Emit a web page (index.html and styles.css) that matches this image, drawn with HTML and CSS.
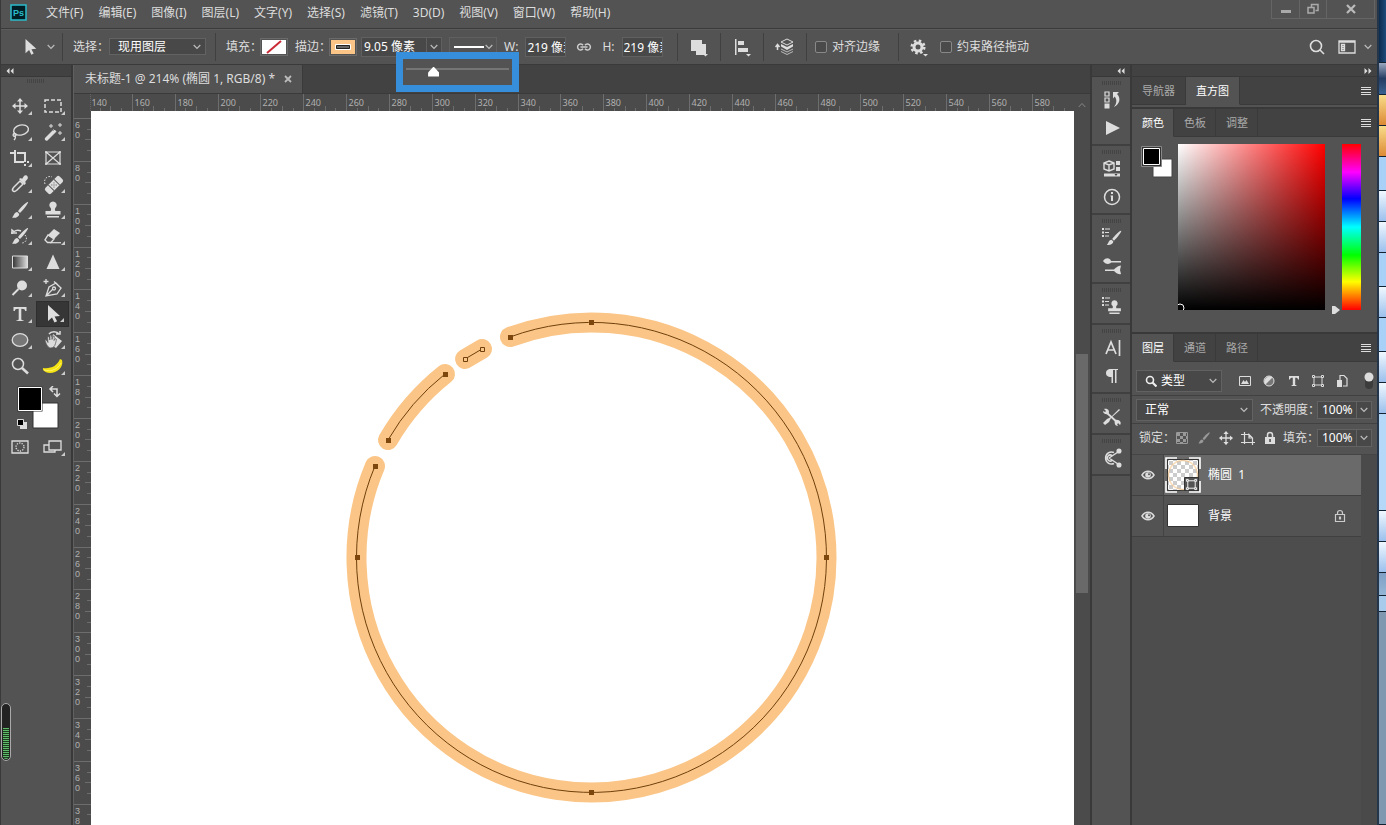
FILE: index.html
```html
<!DOCTYPE html>
<html lang="zh-CN">
<head>
<meta charset="utf-8">
<title>未标题-1</title>
<link rel="stylesheet" href="styles.css">
</head>
<body>
<svg class="defs" aria-hidden="true">
  <symbol id="chev" viewBox="0 0 8 6"><path d="M.7 1 4 4.500 7.300 1" fill="none" stroke="currentColor" stroke-width="1.200"/></symbol>
  <symbol id="left" viewBox="0 0 8 6"><path d="M3.500 0v6L.5 3zM7.500 0v6L4.500 3z" fill="currentColor"/></symbol>
  <symbol id="right" viewBox="0 0 8 6"><path d="M.5 0v6l3-3zM4.500 0v6l3-3z" fill="currentColor"/></symbol>
  <symbol id="lines" viewBox="0 0 10 8"><path d="M0 .5h10M0 2.500h10M0 5.500h10M0 7.500h10" stroke="currentColor"/></symbol>
  <symbol id="move" viewBox="0 0 20 20"><path d="M10 3v14M3 10h14" stroke="currentColor" stroke-width="1.500"/><path d="m10 2 3 3.500H7zM10 18l3-3.500H7zM2 10l3.500-3v6zM18 10l-3.500-3v6z" fill="currentColor"/></symbol>
  <symbol id="brush" viewBox="0 0 20 20"><path d="M18 2c1 .6-5 8.500-8 11L8 11.200C10.500 7.500 17 1.200 18 2zM7.300 12l2 1.900C9 17 5 18.500 2 17.500c1.800-.8 1.500-5 5.300-5.500z" fill="currentColor"/></symbol>
  <symbol id="stamp" viewBox="0 0 20 20"><path d="M10 1.500a3.700 3.700 0 0 1 2.200 6.700c-.5.500-.3 2.300.3 2.800h5v3.500h-15V11h5c.6-.5.8-2.300.3-2.800A3.700 3.700 0 0 1 10 1.500zM4 16h12v1.500H4z" fill="currentColor"/></symbol>
  <symbol id="arrow" viewBox="0 0 20 20"><path d="M5 1v16l4-3.600 2.500 5.100 2.600-1.300-2.500-4.800L17 12z" fill="currentColor"/></symbol>
  <symbol id="eye" viewBox="0 0 14 10"><path d="M1 5c3-5 9-5 12 0-3 5-9 5-12 0z" fill="none" stroke="currentColor" stroke-width="1.500"/><circle cx="7" cy="5" r="2.800" fill="currentColor"/><circle cx="8" cy="4.200" r="1" fill="#555"/></symbol>
  <symbol id="frame" viewBox="0 0 14 14"><path d="M3 3h8v8H3z" fill="none" stroke="currentColor"/><path d="M1.500 1.500h2v2h-2zM10.500 1.500h2v2h-2zM1.500 10.500h2v2h-2zM10.500 10.500h2v2h-2z" fill="#454545" stroke="currentColor"/></symbol>
  <symbol id="list" viewBox="0 0 8 9"><path d="M0 0h2v2H0zM3 .5h5v1H3zM0 3.500h2v2H0zM3 4h4v1H3zM0 7h2v2H0zM3 7.500h4v1H3z" fill="currentColor"/></symbol>
</svg>

<div class="screen">
  <div class="app">
    <header class="menubar">
      <svg class="logo" viewBox="0 0 17 17" role="img" aria-label="Photoshop"><rect x="1" y="1" width="15" height="15" fill="#001d26" stroke="#2bbccb" stroke-width="1.500"/><text x="8.500" y="12" text-anchor="middle">Ps</text></svg>
      <nav class="menus">
        <button>文件(F)</button><button>编辑(E)</button><button>图像(I)</button><button>图层(L)</button><button>文字(Y)</button><button>选择(S)</button><button>滤镜(T)</button><button>3D(D)</button><button>视图(V)</button><button>窗口(W)</button><button>帮助(H)</button>
      </nav>
      <div class="winbtns">
        <button aria-label="最小化"><svg width="12" height="12"><path d="M1 7h10v3H1z" fill="#aaa"/></svg></button>
        <button aria-label="还原"><svg width="12" height="12" fill="none" stroke="#aaa" stroke-width="1.500"><path d="M4.500 4V1.500H11V7.500H8.500M1 4.500h6V10H1z"/></svg></button>
        <button class="wide" aria-label="关闭"><svg width="12" height="12" stroke="#bbb" stroke-width="2.200"><path d="m2 2 8 8M10 2 2 10"/></svg></button>
      </div>
    </header>

    <section class="options">
      <div class="group tool-now"><svg class="i18"><use href="#arrow"/></svg><svg class="chev"><use href="#chev"/></svg></div>
      <div class="group pick">
        <label for="pick">选择：</label>
        <span class="selectbox pickbox"><select id="pick"><option>现用图层</option></select><svg class="chev"><use href="#chev"/></svg></span>
      </div>
      <div class="group paint">
        <span class="cap">填充：</span><button class="swatch" aria-label="填充"><svg width="24" height="14"><path fill="#fff" d="M0 0h24v14H0z"/><path d="m5 13 14-12" stroke="#c92a35" stroke-width="2"/></svg></button>
        <span class="cap second">描边：</span><button class="swatch" aria-label="描边"><svg width="24" height="14"><path fill="#fac586" d="M0 0h24v14H0z"/><path d="M5.500 5.500h13v3h-13z" fill="#666" stroke="#222"/><path d="M4.500 4.500h15v5h-15z" fill="none" stroke="#fff"/></svg></button>
        <span class="widthbox">
          <input type="text" aria-label="描边宽度" value="9.05 像素"><button aria-label="宽度滑块"><svg class="chev"><use href="#chev"/></svg></button>
          <span class="slider-pop"><input type="range" aria-label="描边宽度滑块" min="0" max="100" value="24"></span>
        </span>
        <button class="linebox" aria-label="描边类型"><svg width="30" height="4"><path d="M0 1h30v2H0z" fill="#fff"/></svg><svg class="chev"><use href="#chev"/></svg></button>
        <label for="w" class="wh">W:</label><input id="w" class="num" type="text" value="219 像素">
        <svg class="link" viewBox="0 0 16 10" fill="none" stroke="#ccc" stroke-width="1.500"><path d="M7 3.200A3 3 0 1 0 7 6.800M9 3.200a3 3 0 1 1 0 3.600M4.500 5h7"/></svg>
        <label for="h">H:</label><input id="h" class="num" type="text" value="219 像素">
      </div>
      <div class="group iconcell"><button aria-label="路径操作"><svg class="i18" fill="#ddd"><path d="M1 2h11v4h4v11H6v-4H1z"/><path d="M13 16h5l-2.500 2.500z"/></svg></button></div>
      <div class="group iconcell"><button aria-label="路径对齐方式"><svg class="i18" fill="#ddd"><path d="M2 1h1.500v16H2zM5 3h6v4H5zM5 10h10v4H5zM13 16h5l-2.500 2.500z"/></svg></button></div>
      <div class="group iconcell"><button aria-label="路径排列方式"><svg width="20" height="18"><path d="m12 1 6 3-6 3-6-3z" fill="#535353" stroke="#ddd"/><path d="m6 6 6 3 6-3v2.500l-6 3.500-6-3.500z" fill="#ddd"/><path d="m6 11 6 3 6-3M6 13.500l6 3 6-3" fill="none" stroke="#bbb"/><path d="M2.500 12V7M.5 9l2-2.500 2 2.500" fill="none" stroke="#ddd" stroke-width="1.500"/></svg></button></div>
      <div class="group checks"><label><input type="checkbox">对齐边缘</label></div>
      <div class="group gearcell"><button aria-label="设置"><svg class="i18"><circle cx="8" cy="9" r="4" fill="none" stroke="#ddd" stroke-width="3"/><circle cx="8" cy="9" r="6.300" fill="none" stroke="#ddd" stroke-width="2.500" stroke-dasharray="2.500 2.450"/><path d="M13 16h5l-2.500 2.500z" fill="#ddd"/></svg></button><label><input type="checkbox">约束路径拖动</label></div>
      <div class="opt-right">
        <button aria-label="搜索"><svg width="16" height="16" fill="none" stroke="#ddd" stroke-width="1.600"><circle cx="7" cy="7" r="5.500"/><path d="m11 11 4 4"/></svg></button>
        <button class="space" aria-label="工作区"><svg width="18" height="14" fill="none" stroke="#ddd" stroke-width="1.300"><path d="M1 1h16v12H1zM1 2h16M3.500 4.500h3v6h-3zM3.500 6.500h3M3.500 8.500h3"/></svg></button>
        <svg class="chev"><use href="#chev"/></svg>
      </div>
    </section>

    <main class="work">
      <aside class="tools">
        <div class="strip"><svg width="8" height="6"><use href="#left"/></svg></div>
        <div class="grip"></div>
        <div class="toolgrid">
          <button aria-label="移动"><svg><use href="#move"/></svg></button>
          <button aria-label="矩形选框"><svg fill="none" stroke="currentColor" stroke-width="1.500"><path d="M2 4h16v12H2z" stroke-dasharray="4 2"/></svg></button>
          <button aria-label="套索"><svg fill="none" stroke="currentColor" stroke-width="1.400"><ellipse cx="11" cy="8" rx="7.500" ry="5" transform="rotate(-12 11 8)"/><path d="M5 11c-3 1-2 4 0 3s1-3-1-2M5 14c1 1 0 3-1 4"/></svg></button>
          <button aria-label="魔棒"><svg><path d="m2 16 9-9 2.500 2.500-9 9c-1.500 1-3.500-1-2.500-2.500z" fill="currentColor"/><path d="m10.500 8.500 2-2" stroke="#535353"/><path d="M8 2v4M6 4h4M17 1v4M15 3h4M17 9v4M15 11h4" stroke="currentColor"/></svg></button>
          <button aria-label="裁剪"><svg fill="none" stroke="currentColor" stroke-width="2"><path d="M5 2v12h9M0 5h4M7 5h8v9M15 16v2M17 14h2"/></svg></button>
          <button class="plain" aria-label="图框"><svg fill="none" stroke="currentColor"><path d="M3 4h14v12H3zM3 4l14 12M17 4 3 16" stroke-width="1.200"/><path d="M2.500 3.500h1v1h-1zM16.500 3.500h1v1h-1zM2.500 15.500h1v1h-1zM16.500 15.500h1v1h-1z"/></svg></button>
          <button aria-label="吸管"><svg><path d="M3 17c-1-1 0-3 1-4l6-6 3 3-6 6c-1 1-3 2-4 1z" fill="none" stroke="currentColor" stroke-width="1.500"/><path d="m9 5 2-1 1 1 2-3c2-2 5 1 3.500 3L15 8l1 1-1.500 2z" fill="currentColor"/></svg></button>
          <button aria-label="修复画笔"><svg><g transform="rotate(-45 11 11)"><rect x="1" y="7" width="20" height="8" rx="2" fill="currentColor"/><path d="M7 7v8M15 7v8" stroke="#535353"/><path d="M9 9h1v1H9zM12 9h1v1h-1zM10.500 10.500h1v1h-1zM9 12h1v1H9zM12 12h1v1h-1z" fill="#535353"/></g><path d="M2 10C0 5 5 1 9 3" fill="none" stroke="currentColor" stroke-dasharray="1.500 1.500"/></svg></button>
          <button aria-label="画笔"><svg><use href="#brush"/></svg></button>
          <button aria-label="仿制图章"><svg><use href="#stamp"/></svg></button>
          <button aria-label="历史记录画笔"><svg><use href="#brush"/><path d="M2 8V4l2 1.500C6 4 9 4 11 5M1 7h6" fill="none" stroke="currentColor" stroke-width="1.500"/><path d="M15 9c3 3 1 8-3 8" fill="none" stroke="currentColor" stroke-dasharray="1.500 1.500"/></svg></button>
          <button aria-label="橡皮擦"><svg><path d="m11 3 6 4-6 6-6-4z" fill="currentColor"/><path d="m5 9 6 4-3 3.500H4.500L2 14z" fill="none" stroke="currentColor" stroke-width="1.400"/><path d="M7 16.700h11" stroke="currentColor" stroke-width="1.200"/></svg></button>
          <button aria-label="渐变"><svg><defs><linearGradient id="gr"><stop stop-color="#333"/><stop offset="1" stop-color="#ddd"/></linearGradient></defs><path d="M2.500 4h15v12h-15z" fill="url(#gr)" stroke="#ddd"/></svg></button>
          <button aria-label="锐化"><svg><path d="M10 2.500 16.500 17h-13z" fill="currentColor"/></svg></button>
          <button aria-label="减淡"><svg><circle cx="12" cy="7.500" r="5" fill="currentColor"/><path d="m8.500 11-6 6" stroke="currentColor" stroke-width="2"/></svg></button>
          <button aria-label="钢笔"><svg fill="none" stroke="currentColor" stroke-width="1.300"><path d="m3 18 3-9 7-4 5 5-4 6zM3 18l7-7M11 3.500l7.500 7"/><circle cx="11" cy="10.500" r="1.500"/><path d="M3 1v5M.5 3.500h5"/></svg></button>
          <button aria-label="文字"><svg><path d="M3.500 3h13v4h-1.300c-.3-1.600-.8-2.300-3.900-2.300V15c0 1 .5 1.200 2.200 1.300V17h-7v-.7c1.700-.1 2.200-.3 2.200-1.300V4.700C5.600 4.700 5.100 5.400 4.800 7H3.500z" fill="currentColor"/></svg></button>
          <button class="on" aria-label="路径选择" aria-pressed="true"><svg><use href="#arrow"/></svg></button>
          <button aria-label="椭圆"><svg><ellipse cx="10" cy="10" rx="7.800" ry="6.300" fill="#777" stroke="#ddd" stroke-width="1.300"/></svg></button>
          <button aria-label="旋转视图"><svg><path d="m10 4 9 7-6 7-5-3z" fill="currentColor"/><path d="M2 10c1-1 2 1 3 2.500L4.500 7c.8-1.500 2 0 2.300 3L7 5.500c1-1.500 2 0 2 4l1.200-3.500c1.500-.5 1.300 1 .8 4.500l1.500-2c1.500 0 .5 3 0 5-.7 3-2.500 4.500-5 4.500-2 0-4.500-3.500-5.500-8z" fill="currentColor" stroke="#535353" stroke-width=".7"/><path d="M6 4c2-3 8-3 10 0M13 4h4V1" fill="none" stroke="currentColor" stroke-width="1.500"/></svg></button>
          <button class="plain" aria-label="缩放"><svg fill="none" stroke="currentColor"><circle cx="8" cy="8" r="5.500" stroke-width="1.500"/><path d="m12 12 6 5.500" stroke-width="2.500"/></svg></button>
          <button aria-label="编辑工具栏"><svg><path d="M0 12c8 1 14-2 17-9l2 1c2 7-5 13-12 13-3 0-5-1-7-3z" fill="#f5e314"/><path d="M1 14c8 2 14-1 17-7" fill="none" stroke="#fff36a"/></svg></button>
        </div>
        <svg class="colors" viewBox="0 0 72 46"><path d="M33 17h25v25H33z" fill="#fff" stroke="#333"/><path d="M17.500.5h25v25h-25z" fill="#333"/><path d="M18.500 1.500h23v23h-23z" fill="#000" stroke="#fff"/><path d="M51 3h6v7M53 0l-3 3 3 3M54 7.500l3 3 3-3" fill="none" stroke="#ddd" stroke-width="1.500"/><path d="M20 36h7v7h-7z" fill="#ddd"/><path d="M17.500 33.500h6v6h-6z" fill="#000" stroke="#ddd"/></svg>
        <div class="toolgrid modes">
          <button class="plain" aria-label="快速蒙版"><svg fill="none" stroke="currentColor" stroke-width="1.300"><path d="M2 4h16v12H2z"/><circle cx="10" cy="10" r="4" stroke-dasharray="1.300 1.200"/></svg></button>
          <button aria-label="屏幕模式"><svg fill="#535353" stroke="currentColor" stroke-width="1.300"><path d="M1 8h11v7H1z"/><path d="M6 4h12v9H6z"/></svg></button>
        </div>
        <div class="meter"><i></i></div>
      </aside>

      <section class="doc">
        <div class="doctabs"><button class="doctab">未标题-1 @ 214% (椭圆 1, RGB/8) *<svg width="8" height="8" stroke="#bbb" stroke-width="1.800"><path d="m1 1 6 6M7 1 1 7"/></svg></button></div>
        <div class="hrow"><div class="corner"></div><svg class="hruler" id="hruler"></svg></div>
        <div class="vrow">
          <svg class="vruler" id="vruler"></svg>
          <div class="canvas">
            <svg class="art" viewBox="0 0 983 714" preserveAspectRatio="xMinYMin slice">
              <g class="stroke"><path id="p1" d="M419 226A235 235 0 1 1 284 355"/><path id="p2" d="M297 329A235 235 0 0 1 354 263"/><path id="p3" d="m374 248 17-10"/></g>
              <g class="wire"><use href="#p1"/><use href="#p2"/><use href="#p3"/></g>
              <path class="knots" d="M417 224h5v5h-5zM498 209h5v5h-5zM733 444h5v5h-5zM498 679h5v5h-5zM264 444h5v5h-5zM282 353h5v5h-5zM295 327h5v5h-5zM352 261h5v5h-5z"/>
              <path class="open" d="M372.500 246.500h4v4h-4zM389.500 236.500h4v4h-4z"/>
            </svg>
          </div>
          <div class="scroll"><svg class="chev"><path d="M.7 5 4 1.500 7.300 5" fill="none" stroke="#888"/></svg><i></i></div>
        </div>
      </section>

      <aside class="dock">
        <div class="strip"><svg width="8" height="6"><use href="#left"/></svg></div>
        <div class="dgroup"><button aria-label="历史记录"><svg><path d="M3 2h4v4H3zM3 8h4v4H3z" fill="none" stroke="currentColor" stroke-width="1.200"/><path d="M2.500 13.500h5v5h-5z" fill="currentColor"/><path d="M11 2h6l-2 2c4 4 3 10-3 13 3-4 3-7 .8-10.500L11 8.500z" fill="currentColor"/></svg></button><button aria-label="动作"><svg><path d="m4 3 14 7-14 7z" fill="currentColor"/></svg></button></div>
        <div class="dgroup"><button aria-label="属性"><svg><path d="m7 2 5 2v6l-5 2-5-2V4zM2 4l5 2 5-2M7 6v6" fill="none" stroke="currentColor" stroke-width="1.400"/><path d="M14 2h4v4h-4zM14 8h4v4h-4zM2 14.500h16v3H2z" fill="currentColor"/><path d="m12.500 15 1.500 2 1.500-2z" fill="#444"/></svg></button><button aria-label="信息"><svg><circle cx="10" cy="10" r="7.500" fill="none" stroke="currentColor" stroke-width="1.500"/><path d="M9 5h2v2H9zM8.500 8.500H11V14H9V9.500h-.5z" fill="currentColor"/></svg></button></div>
        <div class="dgroup"><button aria-label="画笔设置"><svg><use href="#list" width="8" height="9"/><use href="#brush" x="3" y="1" width="18" height="18"/></svg></button><button aria-label="画笔"><svg><path d="M1 5c3-4 7-3 8 0h10v1.500H9C7 9 3 8 1 5zM3 13.500h9c1-1 4-4 7-4l-1 4.500 1 4c-3 1-6-2-7-3H3z" fill="currentColor"/></svg></button></div>
        <div class="dgroup"><button aria-label="仿制源"><svg><use href="#list" width="8" height="9"/><use href="#stamp" x="4" y="2" width="17" height="17"/></svg></button></div>
        <div class="dgroup"><button aria-label="字符"><svg fill="none" stroke="currentColor" stroke-width="1.700"><path d="m4 16 5-12 5 12M5.500 12h7M17.500 2v16"/></svg></button><button aria-label="段落"><svg><path d="M16 3v1h-1.500v13H13V4h-2v13H9.500v-6C5 11 4 9 4 7s1.500-4 5-4z" fill="currentColor"/></svg></button></div>
        <div class="dgroup"><button aria-label="工具预设"><svg><path d="m5 6 11 10" stroke="currentColor" stroke-width="1.800"/><path d="M2 2c4-1 6 2 4.500 5C3 8 1 6 1 4l2 1 1-1zM13 13c5-1 7 3 5 5l-2-2-1 1 1 2c-3 0-4-3-3-6z" fill="currentColor"/><path d="M18 3 9 11l-2 4-4 3-2-2 4-4 4-2 8-8z" fill="currentColor"/></svg></button></div>
        <div class="dgroup"><button aria-label="学习"><svg fill="none" stroke="currentColor" stroke-width="1.500"><path d="M12 4.500a6 6 0 1 0 0 11M10 7.500a3 3 0 1 0 0 5M7 10l9-6M7 10l9 6"/><circle cx="17" cy="3" r="1.800" fill="currentColor"/><circle cx="17" cy="17" r="1.800" fill="currentColor"/></svg></button></div>
      </aside>

      <aside class="panels">
        <div class="strip"><svg width="8" height="6"><use href="#right"/></svg></div>
        <section class="panel nav">
          <div class="tabs"><button>导航器</button><button class="on">直方图</button><span class="rest"><svg width="10" height="8"><use href="#lines"/></svg></span></div>
        </section>
        <section class="panel">
          <div class="tabs"><button class="on">颜色</button><button>色板</button><button>调整</button><span class="rest"><svg width="10" height="8"><use href="#lines"/></svg></span></div>
          <div class="picker">
            <svg class="fgbg" viewBox="0 0 32 32"><path d="M12 13h19v18H12z" fill="#fff" stroke="#444"/><path d="M.5.5h20v20H.5z" fill="#333" stroke="#888"/><path d="M2.500 2.500h16v16h-16z" fill="#000" stroke="#fff"/></svg>
            <div class="field"><svg width="8" height="8"><circle cx="2" cy="6" r="4" fill="none" stroke="#fff"/></svg></div>
            <div class="hue"><svg width="8" height="10"><path d="M0 1h3l5 4-5 4H0z" fill="#ddd"/></svg></div>
          </div>
        </section>
        <section class="panel layers">
          <div class="tabs"><button class="on">图层</button><button>通道</button><button>路径</button><span class="rest"><svg width="10" height="8"><use href="#lines"/></svg></span></div>
          <div class="frow filter">
            <span class="selectbox kind"><svg width="12" height="12" fill="none" stroke="#eee" stroke-width="1.600"><circle cx="5" cy="5" r="3.500"/><path d="m7.500 7.500 4 4" stroke-width="2.200"/></svg><select aria-label="图层过滤"><option>类型</option></select><svg class="chev"><use href="#chev"/></svg></span>
            <span class="ficons">
              <svg width="14" height="14"><path d="M1.500 2.500h11v9h-11z" fill="none" stroke="#ddd"/><path d="m3 10 2.500-4L7 8l1.500-2L11 10z" fill="#ddd"/></svg>
              <svg width="14" height="14"><circle cx="7" cy="7" r="5" fill="#777" stroke="#ddd"/><path d="M3.500 10.500a5 5 0 0 1 7-7z" fill="#ddd"/></svg>
              <svg width="14" height="14"><path d="M2 2h10v3.500h-1C10.800 4 10 3.700 8.200 3.700V11l1.300.3V12h-5v-.7l1.300-.3V3.700C4 3.700 3.200 4 3 5.500H2z" fill="#ddd"/></svg>
              <svg width="14" height="14"><use href="#frame"/></svg>
              <svg width="14" height="14"><path d="M5 6V1.500h4l3 3V12H8" fill="none" stroke="#ddd" stroke-width="1.200"/><path d="M2 6h5v7H2z" fill="#ddd"/></svg>
            </span>
            <svg class="toggle" width="10" height="20"><rect x="1" y="2" width="8" height="16" rx="4" fill="#3c3c3c"/><circle cx="5" cy="6" r="4.500" fill="#ddd"/></svg>
          </div>
          <div class="frow blend">
            <span class="selectbox mode"><select aria-label="混合模式"><option>正常</option></select><svg class="chev"><use href="#chev"/></svg></span>
            <label for="op">不透明度：</label><span class="pct"><input id="op" type="text" value="100%"><button aria-label="不透明度滑块"><svg class="chev"><use href="#chev"/></svg></button></span>
          </div>
          <div class="frow lock">
            <span class="cap">锁定：</span>
            <span class="licons">
              <svg width="14" height="14"><path d="M1.500 1.500h11v11h-11z" fill="none" stroke="#999"/><path d="M2 2h3v3H2zM8 2h3v3H8zM5 5h3v3H5zM2 8h3v3H2zM8 8h3v3H8zM11 5h2v3h-2zM5 11h3v2H5z" fill="#999"/></svg>
              <svg width="14" height="14" color="#999"><use href="#brush"/></svg>
              <svg width="14" height="14" viewBox="2 2 16 16"><use href="#move" width="20" height="20"/></svg>
              <svg width="14" height="14" fill="none" stroke="#ddd" stroke-width="1.200"><path d="M3.500 1v12M0 3.500h8M0 11.500h14M11.500 14V7L8 3.500V7h3.500"/></svg>
              <svg width="14" height="14"><path d="M2 6h10v7H2z" fill="#ddd"/><path d="M4.500 6V4a2.500 2.500 0 0 1 5 0v2" fill="none" stroke="#ddd" stroke-width="1.500"/><path d="M6.300 8h1.500v3H6.300z" fill="#444"/></svg>
            </span>
            <label for="fl">填充：</label><span class="pct"><input id="fl" type="text" value="100%"><button aria-label="填充滑块"><svg class="chev"><use href="#chev"/></svg></button></span>
          </div>
          <div class="list">
            <div class="rows">
              <div class="layer sel"><span class="vis"><svg width="14" height="10"><use href="#eye"/></svg></span><span class="body">
                <svg class="thumb" viewBox="0 0 36 36"><defs><pattern id="ck" width="8" height="8" patternUnits="userSpaceOnUse"><path fill="#fff" d="M0 0h8v8H0z"/><path fill="#ccc" d="M0 0h4v4H0zM4 4h4v4H4z"/></pattern></defs><path d="M2.500 2.500h31v31h-31z" fill="url(#ck)" stroke="#333"/><circle cx="18" cy="18" r="14.500" fill="none" stroke="#fac586" stroke-opacity=".6" stroke-width="1.500"/><path d="M19.500 20.500h14v13h-14z" fill="#535353" stroke="#333"/><use href="#frame" x="20" y="21" width="13" height="13"/><path d="M1 12V1h11M24 1h11v11M35 24v11H24M12 35H1V24" fill="none" stroke="#fff" stroke-width="1.600"/></svg>椭圆&nbsp; 1</span></div>
              <div class="layer"><span class="vis"><svg width="14" height="10"><use href="#eye"/></svg></span><span class="body">
                <svg class="thumb" viewBox="0 0 36 36"><path d="M2.500 6.500h31v22h-31z" fill="#fff" stroke="#333"/></svg>背景<svg class="locked" width="12" height="14" fill="none" stroke="#ccc" stroke-width="1.200"><path d="M1.500 5.500h9v7h-9zM3.500 5.500V4a2.500 2.500 0 0 1 5 0v1.500M5.500 8h1v2h-1z"/></svg></span></div>
            </div>
            <div class="listbar"></div>
          </div>
        </section>
      </aside>
    </main>
  </div>
  <div class="desktop"><i class="navy"></i><i class="steel"></i><i class="gold"></i><i class="gold"></i><i class="sky"></i><i class="ice"></i><i class="ice"></i><i class="sky"></i><i class="ice"></i><i class="sky"></i><i class="ice"></i><i class="ice"></i><i class="fade"></i><i class="ice"></i><i class="ice"></i><i class="dusk"></i><i class="pale"></i><i class="haze"></i></div>
</div>
<script src="rulers.js"></script>
</body>
</html>
```

FILE: rulers.js
```js
// Draws both rulers: a labelled tick every 20 document pixels, short ticks every 5.
const UNIT = 42.86 / 20;

function tick(x1, y1, x2, y2) {
  return `<path d="M${x1} ${y1}L${x2} ${y2}"/>`;
}

function horizontal(el) {
  const width = el.getBoundingClientRect().width;
  let out = "";
  for (let v = 140; ; v += 5) {
    const x = Math.round((v - 140) * UNIT) - 1.5;
    if (x > width - 20) break;
    const major = v % 20 === 0;
    out += tick(x, major ? 0 : v % 10 ? 14 : 12, x, 18);
    if (major) out += `<text x="${x + 2}" y="12">${v}</text>`;
  }
  el.innerHTML = out;
}

function vertical(el) {
  const height = el.getBoundingClientRect().height;
  let out = "";
  for (let v = 60; ; v += 5) {
    const y = Math.round((v - 60) * UNIT) + 7.5;
    if (y > height) break;
    const major = v % 20 === 0;
    out += tick(major ? 0 : v % 10 ? 13 : 11, y, 17, y);
    if (major) {
      String(v).split("").forEach((d, i) => {
        const base = y + 9.5 + i * 10;
        if (base < height) out += `<text x="1" y="${base}">${d}</text>`;
      });
    }
  }
  el.innerHTML = out;
}

horizontal(document.getElementById("hruler"));
vertical(document.getElementById("vruler"));
```

FILE: styles.css
```css
* { box-sizing: border-box; }
body {
  margin: 0;
  background: #535353;
  color: #ddd;
  font: 12px/16px "Noto Sans", "Noto Sans CJK SC", sans-serif;
}
button, input, select { font: inherit; color: inherit; margin: 0; padding: 0; border: 0; background: none; border-radius: 0; min-width: 0; }
svg { display: block; flex: none; }
select { appearance: none; flex: 1; outline: 0; }
.defs { position: absolute; width: 0; height: 0; }
.chev { width: 8px; height: 6px; color: #bbb; }
.i18 { width: 18px; height: 18px; overflow: visible; }
.cap { width: 34px; flex: none; }

.screen { display: flex; height: 100vh; overflow: hidden; }
.app { flex: 1; min-width: 0; display: flex; flex-direction: column; border-left: 1px solid #3a3a3a; }

.menubar { display: flex; height: 28px; align-items: center; padding: 0 2px 3px 9px; }
.logo { width: 17px; height: 17px; }
.logo text { font: bold 9px "Liberation Sans", sans-serif; fill: #2bbccb; }
.menus { display: flex; gap: 15px; padding-left: 19px; flex: 1; }
.menus button { white-space: nowrap; }
.winbtns { display: flex; align-self: flex-start; border: 1px solid #656565; border-top: 0; }
.winbtns button { width: 27px; height: 18px; display: grid; place-items: center; border-left: 1px solid #656565; }
.winbtns button:first-child { border-left: 0; }
.winbtns .wide { width: 48px; }

.options { display: flex; height: 37px; align-items: center; border-top: 1px solid #3a3a3a; border-bottom: 1px solid #3a3a3a; white-space: nowrap; box-shadow: inset 0 1px #5c5c5c; }
.group { display: flex; align-items: center; height: 28px; border-right: 1px solid #404040; }
.tool-now { width: 62px; padding-left: 20px; gap: 8px; }
.pick { padding: 0 9px 0 10px; width: 153px; }
.selectbox { display: flex; flex: none; align-items: center; background: #484848; border: 1px solid #626262; padding: 0 4px 0 8px; color: #fff; }
.selectbox.pickbox { flex: 1; height: 17px; }
.paint { padding-left: 10px; width: 462px; }
.swatch { border: 1px solid #6a6a6a; padding: 1px; }
.cap.second { width: 41px; padding-left: 7px; }
.widthbox { position: relative; display: flex; flex: none; height: 20px; width: 81px; margin-left: 4px; border: 1px solid #606060; background: #484848; }
.widthbox input[type=text] { flex: 1; width: 20px; padding-left: 2px; color: #fff; }
.widthbox button { width: 15px; border-left: 1px solid #606060; display: grid; place-items: center; }
.slider-pop { position: absolute; z-index: 2; left: 34px; top: 14px; width: 123px; height: 40px; border: 7px solid #378fdc; background: #535353; padding: 5px 3px; display: flex; }
.slider-pop input { appearance: none; width: 100%; height: 14px; background: linear-gradient(#757575, #757575) 0 4px / 100% 2px no-repeat; }
.slider-pop input::-webkit-slider-thumb { appearance: none; width: 11px; height: 10px; margin-top: 2px; background: #fff; clip-path: polygon(50% 0, 100% 60%, 100% 100%, 0 100%, 0 60%); }
.linebox { display: flex; flex: none; align-items: center; justify-content: space-between; width: 48px; height: 20px; margin-left: 7px; padding: 0 3px 0 4px; border: 1px solid #606060; }
.wh { padding-left: 7px; }
.num { flex: none; width: 41px; height: 20px; margin-left: 7px; padding-left: 1px; border: 1px solid #606060; background: #484848; color: #fff; }
.link { width: 16px; height: 10px; margin: 0 10px; }
.iconcell { width: 43px; justify-content: center; }
.checks { width: 92px; padding-left: 8px; }
.options label { display: flex; align-items: center; }
.options input[type=checkbox] { appearance: none; width: 12px; height: 12px; border: 1px solid #888; border-radius: 2px; background: #4a4a4a; margin-right: 5px; }
.gearcell { border: 0; padding-left: 11px; gap: 12px; }
.opt-right { display: flex; align-items: center; gap: 8px; margin-left: auto; padding-right: 5px; }
.opt-right .space { margin-left: 5px; }

.work { display: flex; flex: 1; min-height: 0; }
.strip { height: 12px; background: #424242; border-bottom: 1px solid #383838; display: flex; align-items: center; padding: 0 5px; color: #ddd; }
.grip { height: 16px; width: 18px; margin: 0 auto; background: repeating-linear-gradient(90deg, #444 0 1px, transparent 1px 2px) 0 2px / 100% 4px no-repeat; }

.tools { width: 72px; border-right: 2px solid #393939; position: relative; }
.toolgrid { display: grid; grid-template-columns: 33px 33px; padding-left: 2px; }
.toolgrid button { height: 26px; position: relative; display: grid; place-items: center; }
.toolgrid svg { width: 20px; height: 20px; overflow: visible; }
.toolgrid button::after { content: ""; position: absolute; right: 4px; bottom: 4px; border: 2px solid; border-color: transparent #ccc #ccc transparent; }
.toolgrid .plain::after { display: none; }
.toolgrid .on { background: #363636; border: 1px solid #2e2e2e; }
.colors { width: 72px; height: 46px; margin: 7px 0 2px -1px; }
.meter { position: absolute; left: 0; bottom: 64px; width: 10px; height: 58px; padding: 24px 1px 1px; border: 1px solid #aaa; border-radius: 5px; background: #222; }
.meter i { display: block; height: 100%; background: repeating-linear-gradient(#5dbb6a 0 1px, #1d3c20 1px 2px); border-radius: 0 0 3px 3px; }

.doc { flex: 1; min-width: 0; display: flex; flex-direction: column; border-left: 1px solid #606060; background: #4b4b4b; }
.doctabs { height: 29px; background: #424242; display: flex; border-bottom: 1px solid #3a3a3a; }
.doctab { display: flex; align-items: center; gap: 9px; padding: 0 10px 0 11px; background: #535353; border-right: 1px solid #3a3a3a; white-space: nowrap; }
.hrow { display: flex; height: 17px; }
.corner { width: 17px; border-right: 1px dotted #666; }
.hruler { flex: 1; width: 100px; height: 17px; }
.hruler, .vruler { stroke: #6d6d6d; }
.hruler text, .vruler text { stroke: none; fill: #b0b0b0; font: 9px "Noto Sans", sans-serif; }
.vruler text { font-family: "Liberation Sans", sans-serif; }
.vrow { display: flex; flex: 1; min-height: 0; }
.vruler { width: 17px; height: 100%; }
.canvas { flex: 1; min-width: 0; background: #fff; overflow: hidden; }
.art { width: 983px; height: 714px; }
.stroke { fill: none; stroke: #fac586; stroke-width: 20; stroke-linecap: round; }
.wire { fill: none; stroke: #70400c; stroke-width: 1; }
.knots { fill: #7c460c; }
.open { fill: #fac586; stroke: #70400c; }
.scroll { width: 16px; background: #4b4b4b; display: flex; flex-direction: column; align-items: center; margin-top: -17px; padding-top: 8px; }
.scroll i { width: 12px; height: 239px; margin-top: 246px; background: #696969; }

.dock { width: 42px; border-left: 2px solid #393939; border-right: 2px solid #393939; }
.dock .strip { justify-content: flex-end; }
.dgroup { border-bottom: 2px solid #404040; padding: 9px 0 2px; background: repeating-linear-gradient(90deg, #444 0 1px, transparent 1px 2px) 10px 4px / 20px 4px no-repeat; }
.dgroup button { display: grid; place-items: center; width: 100%; height: 28px; padding-left: 2px; }
.dgroup svg { width: 20px; height: 20px; overflow: visible; }

.panels { width: 245px; display: flex; flex-direction: column; }
.panels .strip { justify-content: flex-end; }
.panel { border-bottom: 2px solid #393939; }
.nav { padding-bottom: 2px; }
.tabs { display: flex; height: 28px; background: #424242; font-size: 11px; }
.tabs button { padding: 0 9px 0 10px; color: #aaa; border-right: 1px solid #3a3a3a; border-bottom: 1px solid #3a3a3a; }
.tabs .on { background: #535353; color: #fff; border-bottom-color: #535353; }
.tabs .rest { flex: 1; display: flex; align-items: center; justify-content: flex-end; padding-right: 6px; border-bottom: 1px solid #3a3a3a; }
.nav .tabs button { padding: 0 10px; }
.picker { display: flex; padding: 7px 16px 22px 9px; }
.fgbg { width: 32px; height: 32px; margin: 2px 5px 0 0; }
.field { flex: 1; height: 166px; background: linear-gradient(transparent, #000), linear-gradient(90deg, #fff, #f00); display: flex; align-items: flex-end; }
.hue { position: relative; width: 19px; margin-left: 17px; background: linear-gradient(#f00, #f0f 17%, #00f 33%, #0ff 50%, #0f0 67%, #ff0 83%, #f00); }
.hue svg { position: absolute; left: -10px; bottom: -5px; }

.layers { flex: 1; display: flex; flex-direction: column; border: 0; }
.frow { display: flex; align-items: center; padding: 0 3px 0 4px; white-space: nowrap; }
.filter { height: 34px; padding-top: 5px; border-bottom: 1px solid #414141; }
.kind { width: 86px; height: 22px; gap: 4px; }
.ficons { display: flex; flex: 1; justify-content: space-between; padding: 0 15px 0 16px; }
.blend { height: 28px; border-bottom: 1px solid #414141; }
.mode { width: 117px; height: 22px; margin-right: 7px; }
.blend label, .lock label { flex: 1; min-width: 0; }
.pct { display: flex; flex: none; width: 55px; height: 18px; margin-right: 2px; border: 1px solid #626262; background: #484848; color: #fff; }
.pct input { flex: 1; width: 20px; padding-left: 4px; }
.pct button { width: 15px; display: grid; place-items: center; border-left: 1px solid #626262; }
.lock { height: 30px; padding: 0 3px 2px 7px; }
.licons { display: flex; gap: 8px; padding: 0 6px 0 2px; }
.list { flex: 1; display: flex; background: #4d4d4d; border-top: 1px solid #454545; }
.rows { flex: 1; }
.layer { display: flex; height: 41px; border-bottom: 1px solid #404040; background: #535353; }
.vis { width: 32px; display: grid; place-items: center; border-right: 1px solid #444; }
.body { flex: 1; display: flex; align-items: center; gap: 7px; padding-left: 1px; color: #fff; }
.sel .body { background: #6a6a6a; }
.thumb { width: 36px; height: 36px; }
.locked { margin-left: auto; margin-right: 15px; }
.listbar { width: 16px; background: #4a4a4a; }

.desktop { width: 9px; display: flex; flex-direction: column; background: #123; border-left: 2px solid #26364a; overflow: hidden; }
.desktop i { flex: none; margin-bottom: 1px; }
.desktop .navy { height: 62px; background: linear-gradient(90deg, #0c2c50, #1e4a7a); }
.desktop .steel { height: 31px; background: linear-gradient(#99a8c0, #243c62 50%, #3a6290); }
.desktop .gold { height: 30px; background: linear-gradient(#f8dc8a, #dd8a35); }
.desktop .sky { height: 33px; background: #a9d0f6; }
.desktop .ice { height: 30px; background: linear-gradient(#f0f8ff, #9cc0ec); }
.desktop .fade { height: 96px; background: #b5d8f8; }
.desktop .dusk { height: 22px; background: linear-gradient(#7f9fc4, #96b6d6); }
.desktop .pale { height: 15px; background: #a8cbec; }
.desktop .haze { flex: 1; background: #8098b0; }
```
